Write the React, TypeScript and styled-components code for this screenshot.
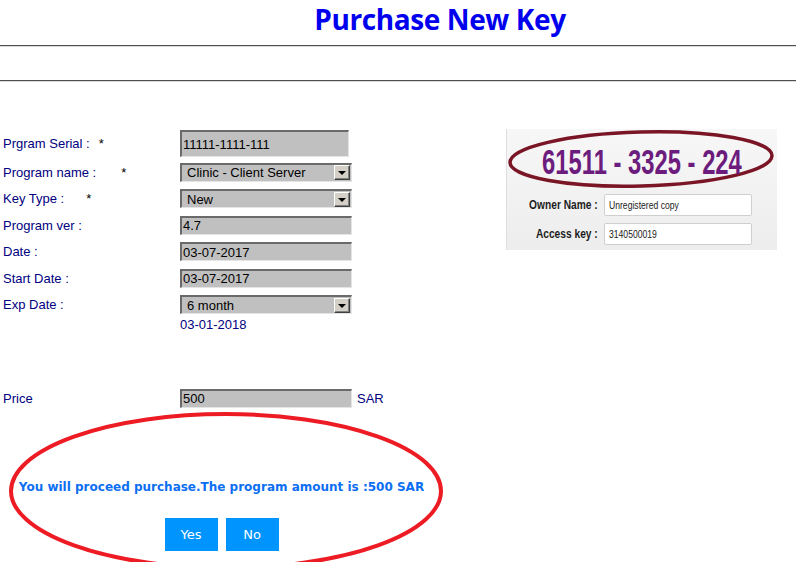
import React from "react";
import styled, { createGlobalStyle } from "styled-components";

const Global = createGlobalStyle`
  html, body { margin: 0; padding: 0; background: #fff; }
  body { font-family: "Liberation Sans", Arial, sans-serif; }
  * { box-sizing: border-box; }
`;

const Page = styled.div`
  width: 796px;
  height: 562px;
  overflow: hidden;
  background: #fff;
`;

const Header = styled.header`
  height: 46px;
  border-bottom: 1px solid #4f4f4f;
  box-shadow: 0 1px 0 #d9d9d9;
  padding-left: 84px;
  text-align: center;
`;

const Title = styled.h1`
  margin: 0;
  font-family: "Open Sans", "Noto Sans", sans-serif;
  font-weight: 700;
  font-size: 28px;
  line-height: 39px;
  letter-spacing: -0.4px;
  color: #0000ee;
`;

const Band = styled.div`
  height: 35px;
  border-bottom: 1px solid #4f4f4f;
  box-shadow: 0 1px 0 #d9d9d9;
`;

const Main = styled.main`
  display: flex;
  align-items: flex-start;
  padding-top: 47px;
`;

const Form = styled.section`
  width: 506px;
  padding-left: 3px;
  flex-shrink: 0;
`;

const Row = styled.div<{ $tall?: boolean }>`
  display: flex;
  align-items: center;
  height: ${(p) => (p.$tall ? "31px" : "26.5px")};
`;

const Label = styled.div`
  width: 177px;
  flex-shrink: 0;
  font-size: 13px;
  color: #000080;
  white-space: pre;
`;

const Star = styled.span<{ $gap: number }>`
  margin-left: ${(p) => p.$gap}px;
  color: #000;
`;

const TextBox = styled.input<{ $tall?: boolean }>`
  width: ${(p) => (p.$tall ? "169px" : "172px")};
  height: ${(p) => (p.$tall ? "27px" : "19px")};
  margin: 0;
  padding: 0 0 0 1px;
  background: #c0c0c0;
  border-style: solid;
  border-width: 2px 1px 1px 2px;
  border-color: #6a6a6a #e4e4e4 #e4e4e4 #6a6a6a;
  font-family: "Liberation Sans", Arial, sans-serif;
  font-size: 13px;
  color: #000;
  outline: none;
`;

const SelectBox = styled.div`
  width: 172px;
  height: 19px;
  display: flex;
  align-items: center;
  justify-content: space-between;
  background: #c0c0c0;
  border-style: solid;
  border-width: 2px 1px 1px 2px;
  border-color: #6a6a6a #e4e4e4 #e4e4e4 #6a6a6a;
  padding: 0 1px 0 5px;
  font-size: 13px;
  color: #000;
`;

const ArrowButton = styled.span`
  width: 16px;
  height: 15px;
  display: flex;
  align-items: center;
  justify-content: center;
  background: #d4d0c8;
  border-style: solid;
  border-width: 1px;
  border-color: #ffffff #404040 #404040 #ffffff;
  box-shadow: inset -1px -1px 0 #808080;

  &::after {
    content: "";
    border-left: 4px solid transparent;
    border-right: 4px solid transparent;
    border-top: 4px solid #000;
    margin-top: 1px;
  }
`;

const ExpValue = styled.div`
  margin-left: 177px;
  height: 14px;
  line-height: 14px;
  font-size: 13px;
  color: #000080;
`;

const Spacer = styled.div`
  height: 53px;
`;

const Unit = styled.span`
  margin-left: 5px;
  font-size: 13px;
  color: #000080;
`;

const Confirm = styled.div`
  position: relative;
  margin-left: -3px;
  width: 443px;
  height: 151px;
  padding-top: 67px;
`;

const Ring = styled.svg`
  position: absolute;
  left: 0;
  top: 0;
  overflow: visible;
  pointer-events: none;
`;

const Message = styled.p`
  position: relative;
  margin: 0;
  text-align: center;
  font-family: "DejaVu Sans", Verdana, sans-serif;
  font-weight: 700;
  font-size: 12px;
  line-height: 16px;
  color: #0c6ff3;
  white-space: nowrap;
`;

const Buttons = styled.div`
  position: relative;
  display: flex;
  justify-content: center;
  gap: 8px;
  margin-top: 23px;
`;

const Btn = styled.button`
  width: 53px;
  height: 33px;
  border: none;
  background: #0094ff;
  color: #fff;
  font-family: "DejaVu Sans", Verdana, sans-serif;
  font-size: 13px;
  padding: 0;
`;

const KeyCard = styled.aside`
  width: 271px;
  height: 121px;
  margin-top: 1px;
  background: linear-gradient(#f7f7f7, #ededed);
  border-left: 1px solid #dedede;
`;

const KeyHead = styled.div`
  position: relative;
  height: 63px;
  display: flex;
  align-items: center;
  justify-content: center;
`;

const KeyNumber = styled.div`
  font-family: "Liberation Sans Narrow", "Liberation Sans", Arial, sans-serif;
  font-weight: 700;
  font-size: 35px;
  color: #6c1c7d;
  white-space: pre;
  transform: scaleX(0.68);
  margin-top: 2px;
`;

const Fields = styled.div`
  display: grid;
  grid-template-columns: 91px 148px;
  column-gap: 6px;
  row-gap: 7px;
  padding-top: 2px;
`;

const FieldLabel = styled.div`
  justify-self: end;
  align-self: center;
  font-weight: 700;
  font-size: 12px;
  color: #1d1d1d;
  white-space: nowrap;
  transform: scaleX(0.85);
  transform-origin: right center;
`;

const FieldBox = styled.div`
  height: 22px;
  background: #fff;
  border: 1px solid #cfcfcf;
  border-radius: 2px;
  padding-left: 4px;
  display: flex;
  align-items: center;
`;

const FieldText = styled.span`
  font-size: 10.5px;
  color: #222;
  white-space: nowrap;
  transform: scaleX(0.82);
  transform-origin: left center;
`;

export default function App() {
  return (
    <Page>
      <Global />
      <Header>
        <Title>Purchase New Key</Title>
      </Header>
      <Band />
      <Main>
        <Form>
          <Row $tall>
            <Label>
              Prgram Serial :<Star $gap={9}>*</Star>
            </Label>
            <TextBox $tall readOnly defaultValue="11111-1111-111" />
          </Row>
          <Row>
            <Label>
              Program name :<Star $gap={25}>*</Star>
            </Label>
            <SelectBox>
              Clinic - Client Server
              <ArrowButton />
            </SelectBox>
          </Row>
          <Row>
            <Label>
              Key Type :<Star $gap={22}>*</Star>
            </Label>
            <SelectBox>
              New
              <ArrowButton />
            </SelectBox>
          </Row>
          <Row>
            <Label>Program ver :</Label>
            <TextBox readOnly defaultValue="4.7" />
          </Row>
          <Row>
            <Label>Date :</Label>
            <TextBox readOnly defaultValue="03-07-2017" />
          </Row>
          <Row>
            <Label>Start Date :</Label>
            <TextBox readOnly defaultValue="03-07-2017" />
          </Row>
          <Row>
            <Label>Exp Date :</Label>
            <SelectBox>
              6 month
              <ArrowButton />
            </SelectBox>
          </Row>
          <ExpValue>03-01-2018</ExpValue>
          <Spacer />
          <Row>
            <Label>Price</Label>
            <TextBox readOnly defaultValue="500" />
            <Unit>SAR</Unit>
          </Row>
          <Confirm>
            <Ring width="460" height="160" viewBox="0 0 460 160">
              <ellipse cx="226" cy="79" rx="215" ry="77" fill="none" stroke="#ed1c24" strokeWidth="4" />
            </Ring>
            <Message>You will proceed purchase.The program amount is :500 SAR</Message>
            <Buttons>
              <Btn>Yes</Btn>
              <Btn>No</Btn>
            </Buttons>
          </Confirm>
        </Form>
        <KeyCard>
          <KeyHead>
            <Ring width="269" height="63" viewBox="0 0 269 63">
              <ellipse cx="134" cy="30" rx="131" ry="27" fill="none" stroke="#7a1526" strokeWidth="3.5" transform="rotate(-1.5 134 30)" />
            </Ring>
            <KeyNumber>61511 - 3325 - 224</KeyNumber>
          </KeyHead>
          <Fields>
            <FieldLabel>Owner Name :</FieldLabel>
            <FieldBox>
              <FieldText>Unregistered copy</FieldText>
            </FieldBox>
            <FieldLabel>Access key :</FieldLabel>
            <FieldBox>
              <FieldText>3140500019</FieldText>
            </FieldBox>
          </Fields>
        </KeyCard>
      </Main>
    </Page>
  );
}
